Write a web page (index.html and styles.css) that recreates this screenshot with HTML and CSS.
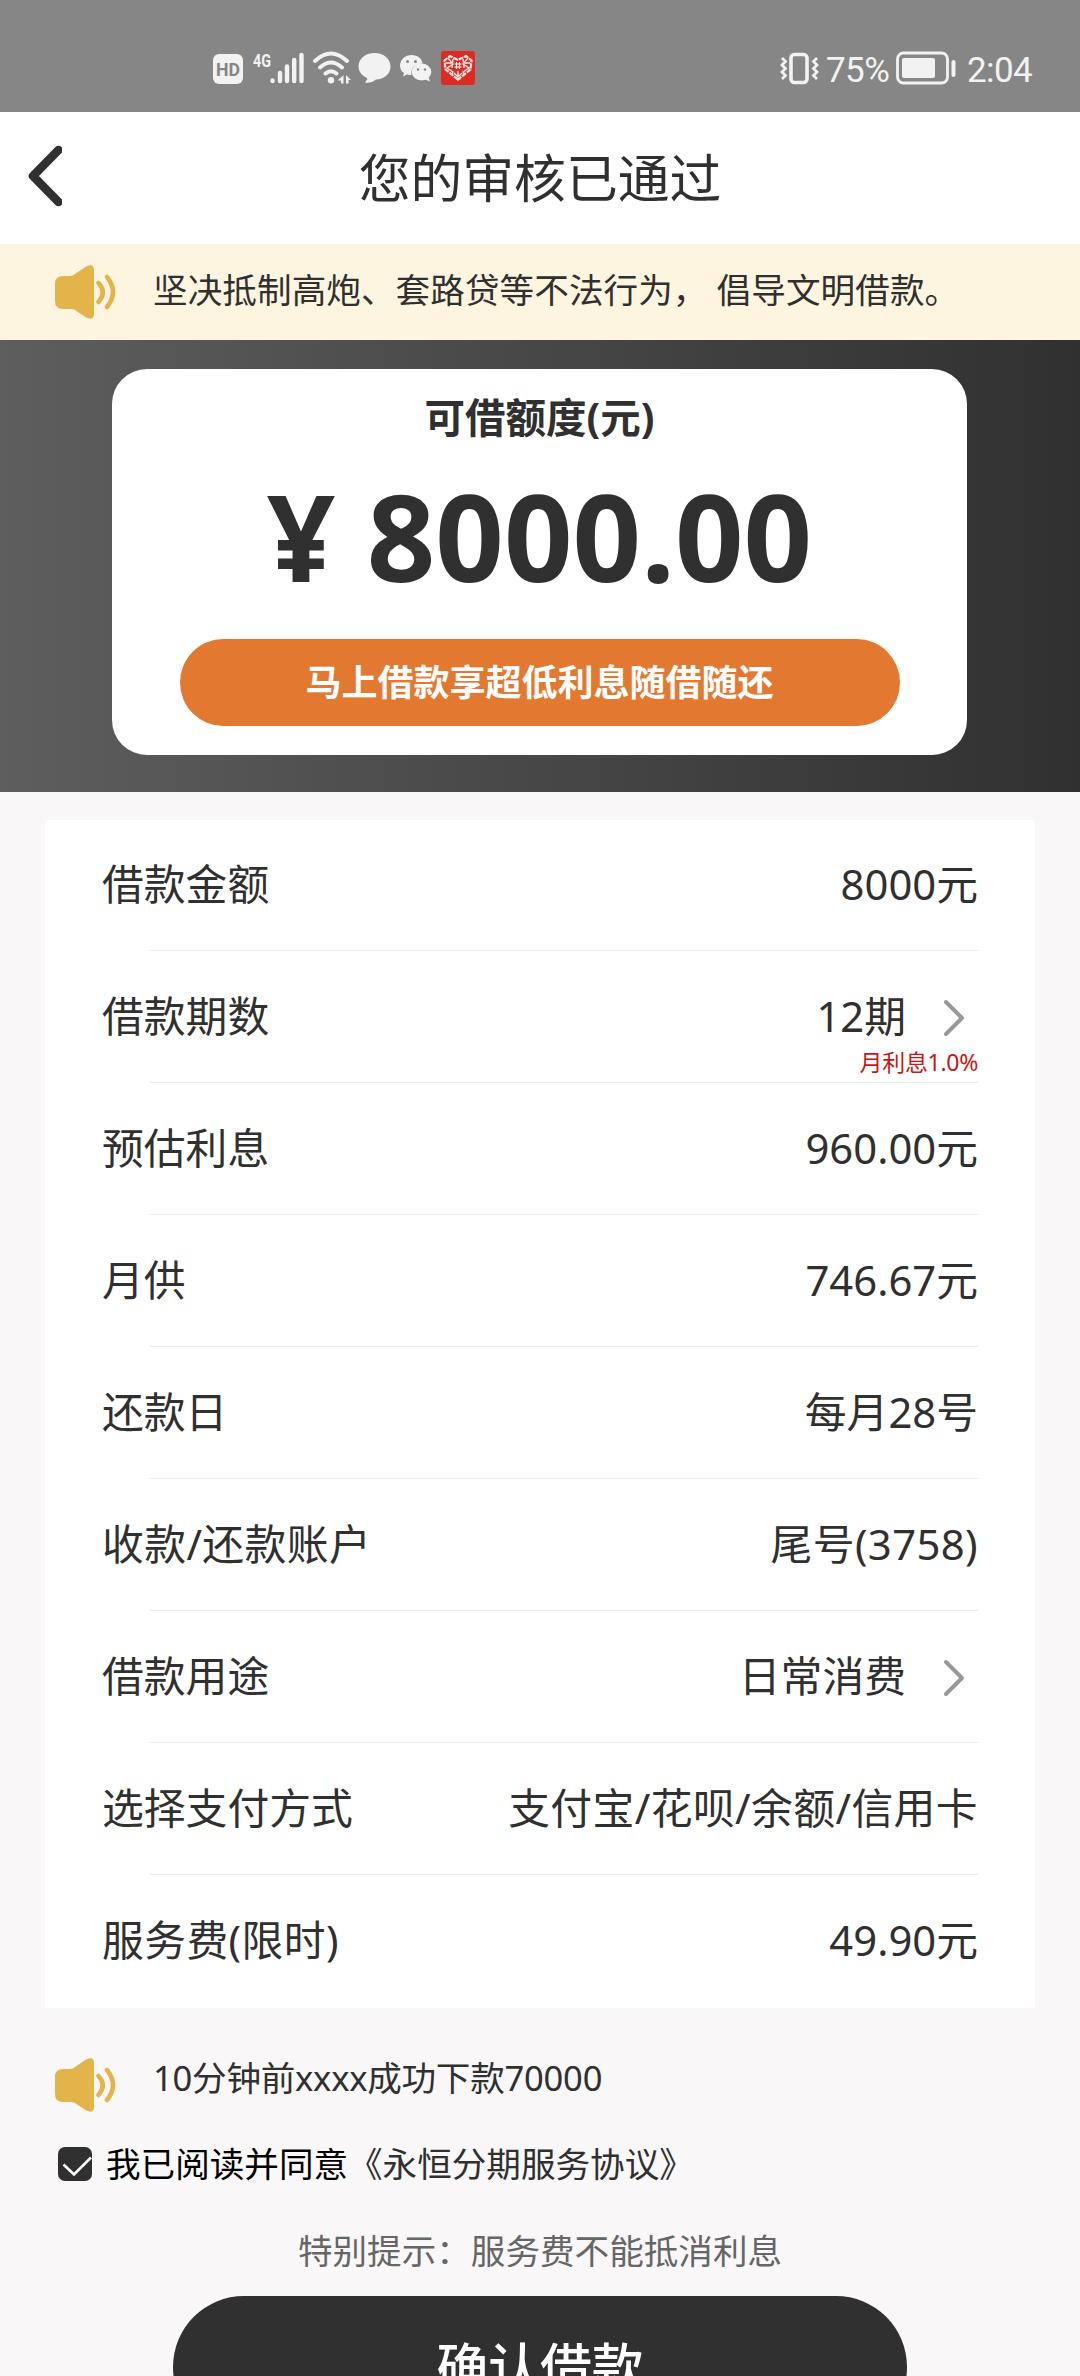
FILE: index.html
```html
<!DOCTYPE html>
<html lang="zh-CN">
<head>
<meta charset="utf-8">
<title>您的审核已通过</title>
<link rel="stylesheet" href="styles.css">
</head>
<body>
<svg class="symbols" aria-hidden="true">
  <symbol id="speaker" viewBox="0 0 62 54">
    <path d="M8 11H15Q18 11 20 9L31 1.500Q39-2 39 5V49Q39 56 31 52.500L20 45Q18 44 15 44H8Q0 44 0 36V19Q0 11 8 11Z" fill="#e3b44a"/>
    <path d="M43.500 18Q52 27 43.500 37M52 12Q64 27 52 42" fill="none" stroke="#e3b44a" stroke-width="4.500" stroke-linecap="round"/>
  </symbol>
  <symbol id="chevron" viewBox="0 0 22 38">
    <path d="M3 3L19 19L3 35" fill="none" stroke="#999" stroke-width="4" stroke-linecap="round" stroke-linejoin="round"/>
  </symbol>
</svg>

<div class="status">
  <svg class="status-icons" width="268" height="40" viewBox="210 48 268 40">
    <rect x="213" y="54" width="30" height="30" rx="6" fill="#f2f2f2"/>
    <text class="hd" x="216" y="76" textLength="24" lengthAdjust="spacingAndGlyphs">HD</text>
    <text class="fourg" x="253" y="67" textLength="18" lengthAdjust="spacingAndGlyphs">4G</text>
    <g stroke="#f2f2f2" stroke-width="4.400" stroke-linecap="round">
      <path d="M272.500 80.500V81M280 73V81M287 66.500V81M294.200 60V81M301.500 55V81"/>
    </g>
    <g fill="none" stroke="#f2f2f2" stroke-width="3.900" stroke-linecap="round">
      <path d="M315 61Q331 46 347 61M320 67.500Q331 57.500 342 67.500M325.500 73.500Q331 69 336.500 73.500"/>
    </g>
    <circle cx="331" cy="80.200" r="3.200" fill="#f2f2f2"/>
    <path d="M343.500 75V83.500H341V80.500H337.500ZM346 75L351 80H348.500V83.500H346Z" fill="#f2f2f2"/>
    <path d="M374.500 53C384 53 390.500 59 390.500 66.500S384 79.500 376 79.500Q373 82.500 366 83Q364.500 82.500 366 81Q368 79 367 78C361.500 75.500 358.500 71 358.500 66.500C358.500 59 365 53 374.500 53Z" fill="#f2f2f2"/>
    <path d="M411.500 55C418 55 422 59 422.500 63.500C415 63.500 410 68.500 411.500 75Q409 75 407 74.500L403 76.500L404 73C396 67.500 401 55 411.500 55Z" fill="#f2f2f2"/>
    <ellipse cx="421.500" cy="72" rx="9.800" ry="8.500" fill="#f2f2f2"/>
    <path d="M424 79L430 81.500L428.500 77Z" fill="#f2f2f2"/>
    <g fill="#868686"><circle cx="407.500" cy="61.500" r="1.500"/><circle cx="415.500" cy="61.500" r="1.500"/><circle cx="418" cy="69.500" r="1.200"/><circle cx="425" cy="69.500" r="1.200"/></g>
    <rect x="441" y="51" width="34" height="34" rx="3" fill="#dc2b22"/>
    <path d="M458 79.500L445.500 69.500L444.500 60.500L450 56L458 60L466 56L471.500 60.500L470.500 69.500Z" fill="none" stroke="#fbe8e6" stroke-width="2.200" stroke-dasharray="5 1"/>
    <path d="M448 58L453 64L447 68L453 72L451 75M468 58L463 64L469 68L463 72L465 75M446 63H452M464 63H470M453 59L452 68M463 59L464 68M454 73L458 77L462 73M458 71V77" fill="none" stroke="#fbe8e6" stroke-width="1.400"/>
    <path d="M454.500 64H461.500M454.500 67H461.500M456.500 62V69M459.500 62V69" stroke="#fff" stroke-width="1.100"/>
  </svg>
  <div class="status-right">
    <svg width="42" height="36" viewBox="0 0 42 36">
      <rect x="12" y="3.500" width="16" height="28" rx="3.500" fill="none" stroke="#f2f2f2" stroke-width="3.600"/>
      <path d="M3 7L6.500 10.500L3 14L6.500 17.500L3 21L6.500 24.500L3 28M38 7L34.500 10.500L38 14L34.500 17.500L38 21L34.500 24.500L38 28" fill="none" stroke="#f2f2f2" stroke-width="2.800"/>
    </svg>
    <span class="percent">75%</span>
    <svg class="battery" width="62" height="34" viewBox="0 0 62 34">
      <rect x="1.500" y="2" width="50" height="30" rx="6" fill="none" stroke="#f2f2f2" stroke-width="2.800"/>
      <rect x="6" y="7" width="33" height="20" rx="2" fill="#f2f2f2"/>
      <rect x="55.500" y="9" width="4" height="17" rx="2" fill="#f2f2f2"/>
    </svg>
    <span class="clock">2:04</span>
  </div>
</div>

<header class="header">
  <svg class="back" width="36" height="64" viewBox="0 0 36 64"><path d="M32.500 6L7 32L32.500 58" fill="none" stroke="#303030" stroke-width="8.500" stroke-linecap="round" stroke-linejoin="round"/></svg>
  <h1 class="title">您的审核已通过</h1>
</header>

<div class="notice">
  <svg class="speaker"><use href="#speaker"/></svg>
  <span>坚决抵制高炮、套路贷等不法行为， 倡导文明借款。</span>
</div>

<section class="hero">
  <div class="quota">
    <div class="quota-label">可借额度(元)</div>
    <div class="quota-amount">¥ 8000.00</div>
    <div class="quota-banner">马上借款享超低利息随借随还</div>
  </div>
</section>

<main class="list">
  <div class="row"><span>借款金额</span><span>8000元</span></div>
  <div class="row"><span>借款期数</span><span class="pick">12期<svg class="chevron"><use href="#chevron"/></svg></span><span class="rate">月利息1.0%</span></div>
  <div class="row"><span>预估利息</span><span>960.00元</span></div>
  <div class="row"><span>月供</span><span>746.67元</span></div>
  <div class="row"><span>还款日</span><span>每月28号</span></div>
  <div class="row"><span class="spaced">收款/还款账户</span><span class="spaced">尾号(3758)</span></div>
  <div class="row"><span>借款用途</span><span class="pick">日常消费<svg class="chevron"><use href="#chevron"/></svg></span></div>
  <div class="row"><span>选择支付方式</span><span class="spaced">支付宝/花呗/余额/信用卡</span></div>
  <div class="row"><span class="spaced">服务费(限时)</span><span>49.90元</span></div>
</main>

<div class="news">
  <svg class="speaker"><use href="#speaker"/></svg>
  <span class="news-text">10分钟前xxxx成功下款70000</span>
</div>

<div class="agree">
  <svg width="34" height="34" viewBox="0 0 34 34"><rect width="34" height="34" rx="7" fill="#303030"/><path d="M5.500 17.500L16 27.500L33 10.500" fill="none" stroke="#fff" stroke-width="2.600"/></svg>
  <span>我已阅读并同意<span class="agreement">《永恒分期服务协议》</span></span>
</div>

<p class="tip">特别提示：服务费不能抵消利息</p>
<button class="confirm">确认借款</button>
</body>
</html>
```
FILE: styles.css
```css
* { box-sizing: border-box; }

body {
  margin: 0;
  width: 1080px;
  height: 2376px;
  overflow: hidden;
  display: flex;
  flex-direction: column;
  background: #f9f7f8;
  color: #303030;
  font-family: "Noto Sans", "Noto Sans CJK SC", sans-serif;
  font-size: 34.6px;
}

body > * { flex-shrink: 0; }

.symbols { display: none; }

.status {
  height: 112px;
  padding: 48px 47px 0 210px;
  display: flex;
  justify-content: space-between;
  background: #868686;
  color: #f2f2f2;
  font-family: Roboto, sans-serif;
  font-size: 35px;
  line-height: 44px;
}

.hd { font: 700 19px Roboto, sans-serif; fill: #868686; }
.fourg { font: 700 19px Roboto, sans-serif; fill: #f2f2f2; }

.status-right { display: flex; }
.status-right svg { margin-top: 3px; }
.percent { width: 69px; margin-left: 5px; padding-top: 1px; letter-spacing: -0.6px; }
.clock { width: 66px; margin-left: 9px; padding-top: 1px; letter-spacing: -0.6px; }
.battery { margin-left: 1px; }

.header {
  height: 132px;
  padding: 0 26px;
  display: grid;
  grid-template-columns: 36px 1fr 36px;
  align-items: center;
  background: #fff;
}

.back { margin-bottom: 5px; }

.title {
  margin: 0;
  text-align: center;
  font-size: 51.8px;
  font-weight: 400;
  line-height: 76px;
}

.notice {
  height: 96px;
  padding: 0 50px 0 55px;
  display: flex;
  align-items: center;
  gap: 36px;
  background: #fef5e0;
  line-height: 50px;
}

.notice span { margin-bottom: 4px; letter-spacing: 0.08px; }
.speaker { width: 62px; height: 54px; }

.hero {
  height: 452px;
  padding: 29px 113px 37px 112px;
  background: linear-gradient(90deg, #5e5e5e, #303030);
}

.quota {
  height: 386px;
  padding-top: 21px;
  border-radius: 35px;
  background: #fff;
  text-align: center;
  font-weight: 700;
}

.quota-label { font-size: 40.5px; line-height: 56px; }

.quota-amount {
  height: 193px;
  font-size: 120px;
  line-height: 180px;
}

.quota-banner {
  width: 720px;
  height: 87px;
  margin: 0 auto;
  border-radius: 44px;
  background: #e37931;
  color: #fff;
  font-size: 36px;
  line-height: 87px;
}

.list {
  margin: 28px 45px 0;
  background: #fff;
  font-size: 41.8px;
  line-height: 56px;
}

.row {
  height: 132px;
  padding: 0 57px 4px;
  display: grid;
  grid-template-columns: auto auto;
  grid-template-rows: 128px;
  justify-content: space-between;
  align-items: center;
  background: linear-gradient(#ececec, #ececec) 105px 130px / 828px 1px no-repeat;
}

.row:last-child { background: none; }

.spaced { letter-spacing: 0.4px; }
.pick { display: flex; align-items: center; }
.chevron { width: 22px; height: 38px; margin: 3px 13px 0 37px; }

.rate {
  grid-column: 2;
  justify-self: end;
  align-self: start;
  height: 32px;
  margin-top: -34px;
  color: #cb1512;
  font-size: 23px;
  letter-spacing: -0.3px;
  line-height: 32px;
}

.news {
  height: 54px;
  margin: 50px 55px 0;
  display: flex;
  gap: 36px;
}

.news-text { letter-spacing: -0.25px; line-height: 40px; }

.agree {
  height: 50px;
  margin: 27px 58px 0;
  display: flex;
  align-items: center;
  gap: 14px;
  color: #000;
  line-height: 50px;
}

.agree span { margin-bottom: 1px; }
.agreement { color: #303030; }

.tip {
  height: 50px;
  margin: 37px 0 0;
  color: #666;
  text-align: center;
  line-height: 50px;
}

.confirm {
  width: 734px;
  height: 142px;
  margin: 20px auto 0;
  padding: 0;
  border: 0;
  border-radius: 71px;
  background: #303030;
  color: #fff;
  font-family: inherit;
  font-size: 51.8px;
  font-weight: 500;
  line-height: 140px;
}
```
